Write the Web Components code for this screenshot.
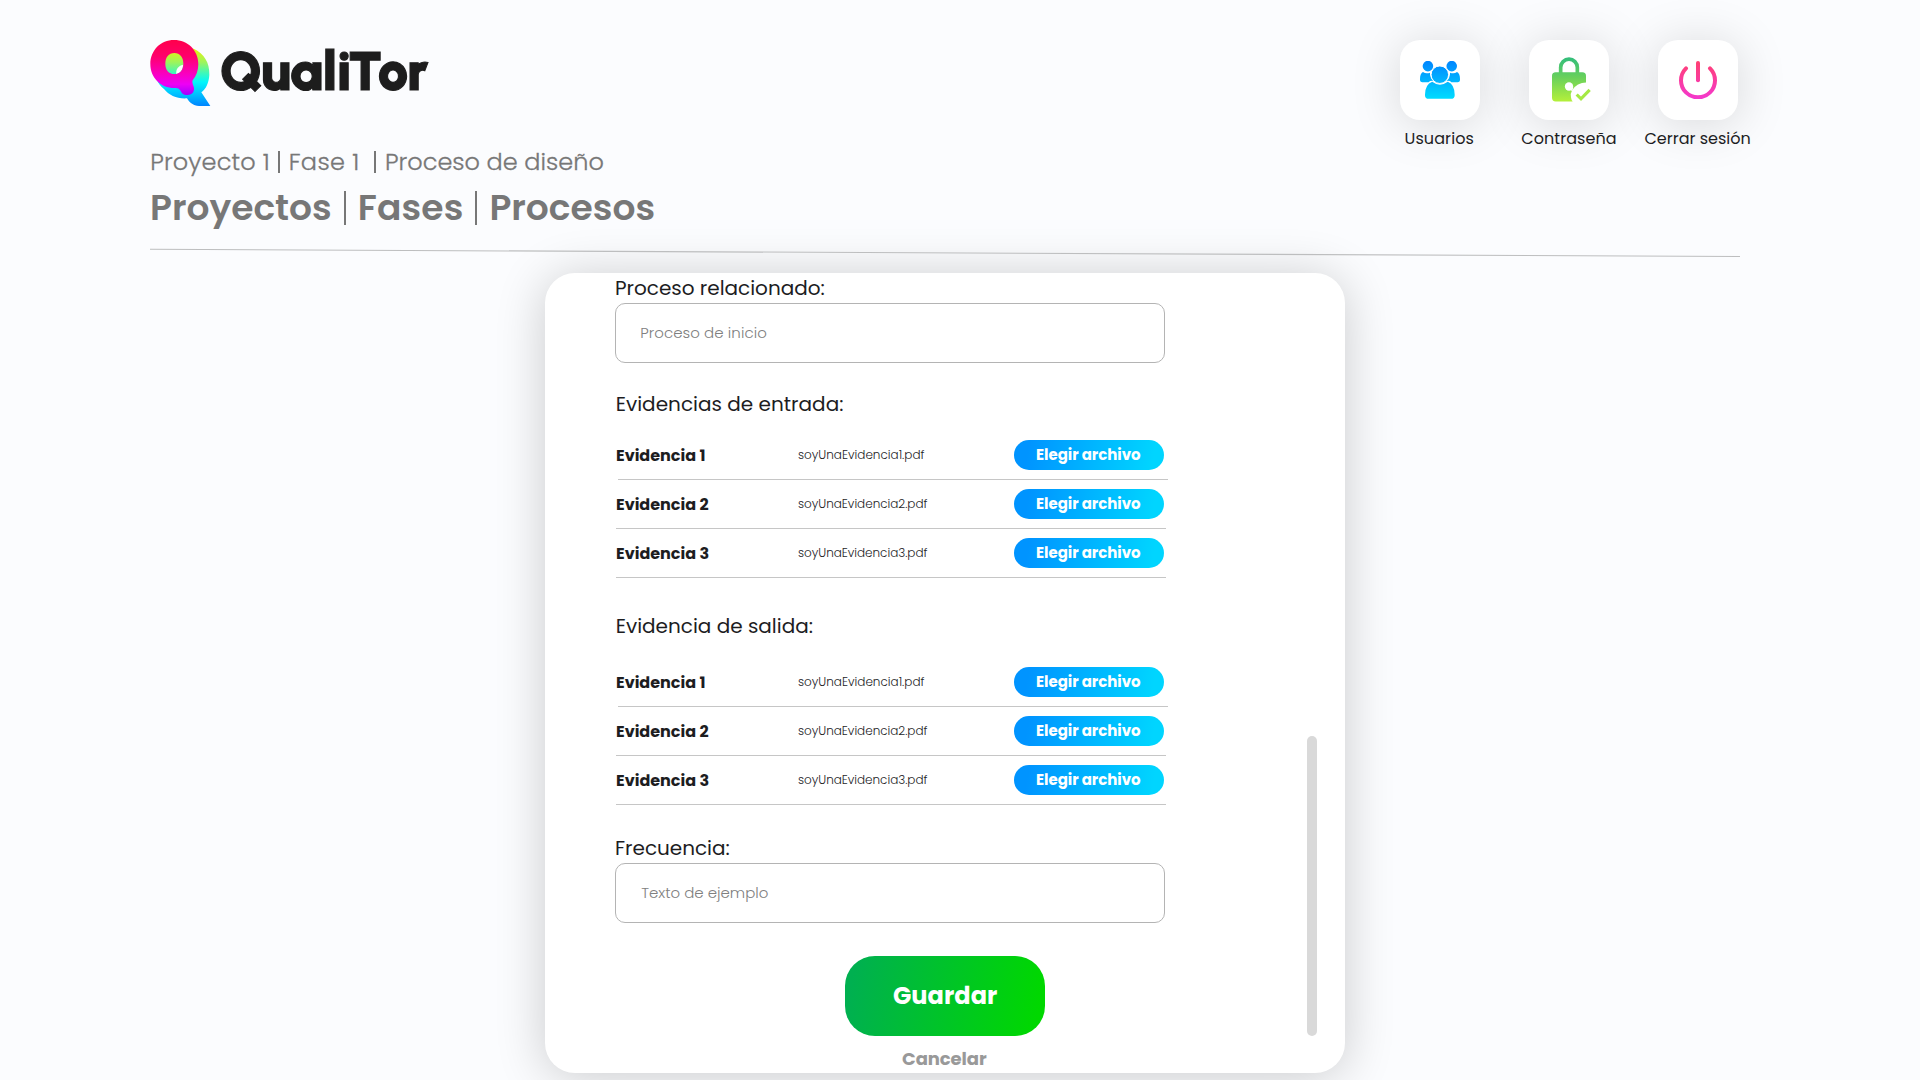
<!DOCTYPE html>
<html lang="es">
<head>
<meta charset="utf-8">
<title>QualiTor</title>
<style>
html,body{margin:0;height:1080px;overflow:hidden;background:#fbfcfe}
body{font-family:Poppins,Inter,"Open Sans",sans-serif;font-feature-settings:"cv11" 1;color:#1d1d1f}
</style>
</head>
<body>
<quali-app></quali-app>
<script>
const ctx = document.createElement('canvas').getContext('2d');

// Single-line text whose visible width is set by the "w" attribute.
customElements.define('fit-text', class extends HTMLElement {
  constructor() {
    super();
    this.attachShadow({mode: 'open'}).innerHTML =
      `<style>:host{display:inline-block;white-space:pre;flex:none}</style><slot></slot>`;
  }
  connectedCallback() {
    const t = this.textContent, w = +this.getAttribute('w');
    if (this.hasAttribute('size')) this.style.fontSize = this.getAttribute('size') + 'px';
    if (this.hasAttribute('weight')) this.style.fontWeight = this.getAttribute('weight');
    if (!w || t.length < 2) return;
    const cs = getComputedStyle(this);
    ctx.font = `${cs.fontWeight} ${cs.fontSize} ${cs.fontFamily}`;
    const a = ctx.measureText(t[0]), b = ctx.measureText(t[t.length - 1]);
    const left = -a.actualBoundingBoxLeft, right = b.width - b.actualBoundingBoxRight;
    const range = document.createRange();
    range.selectNodeContents(this);
    const natural = range.getBoundingClientRect().width;
    const ls = (w - (natural - left - right)) / (t.length - 1);
    this.style.letterSpacing = ls + 'px';
    this.style.marginLeft = -left + 'px';
    this.style.marginRight = -(right + ls) + 'px';
  }
});

customElements.define('quali-logo', class extends HTMLElement {
  constructor() {
    super();
    this.attachShadow({mode: 'open'}).innerHTML = `
<style>
:host{display:flex;height:66px}
svg{display:block;width:61px;height:67px;flex:none}
.word{display:flex;padding-left:10.8px}
fit-text{font-family:Urbanist,Poppins,Inter,sans-serif;line-height:62px;color:#1d1d1d;-webkit-text-stroke:1.1px #1d1d1d}
</style>
<svg viewBox="59 60 183 201">
  <defs>
    <linearGradient id="back" x1="0" y1="90" x2="0" y2="258" gradientUnits="userSpaceOnUse">
      <stop offset="0" stop-color="#e2f312"/><stop offset=".22" stop-color="#9df45c"/><stop offset=".42" stop-color="#3bf8bd"/><stop offset=".57" stop-color="#00f6fb"/><stop offset=".8" stop-color="#00bdff"/><stop offset="1" stop-color="#0084ff"/>
    </linearGradient>
    <linearGradient id="front" x1="0" y1="60" x2="0" y2="226" gradientUnits="userSpaceOnUse">
      <stop offset="0" stop-color="#ff004b"/><stop offset=".3" stop-color="#ff006c"/><stop offset=".6" stop-color="#fa00bd"/><stop offset=".8" stop-color="#ee00f5"/><stop offset="1" stop-color="#9f00ff"/>
    </linearGradient>
  </defs>
  <path fill="url(#back)" fill-rule="evenodd" d="M88 88 L190 86 C222 101 238 128 237 164 C236 187 227 207 213 217 L240 258 L206 258 C189 257 177 248 170 235 C141 237 116 226 101 207 C91 199 84 191 80 180Z M158 134 C144 137 136 148 138 162 C149 160 158 150 158 134Z"/>
  <path fill="url(#front)" fill-rule="evenodd" d="M131 60 C172 60 204 91 204 132 C204 151 198 168 187 181 Q184 186 188 195 C196 210 188 225 171 225 C158 225 154 219 149 210 Q145 203 134 204 C91 205 60 173 60 132 C60 91 91 60 131 60Z M132 99 C115 99 105 112 105 131 C105 150 115 162 132 162 C149 162 159 150 159 131 C159 112 149 99 132 99Z"/>
</svg>
<div class="word"><fit-text w="207" size="54.5" weight="900">QualiTor</fit-text></div>`;
  }
});

const ICONS = {
  users: `<svg width="40" height="38" viewBox="120 123 121 114"><defs><linearGradient id="g" x1="0" y1="123" x2="0" y2="237" gradientUnits="userSpaceOnUse"><stop stop-color="#0086ff"/><stop offset="1" stop-color="#00dcff"/></linearGradient></defs>
    <g fill="url(#g)"><circle cx="144" cy="138" r="16"/><circle cx="216" cy="138" r="16"/>
    <path d="M129 156Q138 162 150 158Q150 176 162 183Q151 181 146 187H127Q119 187 120 177Q120 161 129 156Z"/>
    <path d="M232 156Q223 162 211 158Q211 176 199 183Q210 181 215 187H234Q242 187 241 177Q241 161 232 156Z"/>
    <circle cx="180" cy="164" r="26.5" stroke="#fff" stroke-width="3"/>
    <path d="M157 185Q180 203 204 185Q225 193 225 225Q225 237 213 237H147Q135 237 135 225Q135 193 157 185Z"/></g></svg>`,
  lock: `<svg width="39" height="45" style="margin:-2px 0 0 4.6px" viewBox="516 110 117 134"><defs><linearGradient id="g" x1="0" y1="110" x2="0" y2="243" gradientUnits="userSpaceOnUse"><stop stop-color="#32bd7c"/><stop offset=".45" stop-color="#68d05c"/><stop offset="1" stop-color="#b4f03a"/></linearGradient></defs>
    <path d="M542 160V141A25 25 0 0 1 592 141V160" fill="none" stroke="url(#g)" stroke-width="11"/>
    <path fill="url(#g)" d="M527 155H607Q618 155 618 166V186Q606 186 594 192Q568 208 573 231Q574 238 578 243H527Q516 243 516 232V166Q516 155 527 155Z"/>
    <circle cx="567" cy="198" r="12.5" fill="#fff"/><path d="M567 204L580 201L576 212Z" fill="#fff"/>
    <path d="M590 222L603 235L629 208" fill="none" stroke="#a5e944" stroke-width="9.5"/></svg>`,
  power: `<svg width="38" height="38" viewBox="897 123 114 114"><defs><linearGradient id="g" x1="0" y1="123" x2="0" y2="237" gradientUnits="userSpaceOnUse"><stop stop-color="#ff4071"/><stop offset="1" stop-color="#f438cd"/></linearGradient></defs>
    <path fill="url(#g)" d="M948 129Q948 123 954 123Q960 123 960 129V181Q960 187 954 187Q948 187 948 181Z"/>
    <path d="M918 145A51 51 0 1 0 990 145" fill="none" stroke="url(#g)" stroke-width="12" stroke-linecap="round"/></svg>`
};

customElements.define('nav-tile', class extends HTMLElement {
  constructor() {
    super();
    const a = n => this.getAttribute(n);
    this.attachShadow({mode: 'open'}).innerHTML = `
<style>
:host{display:flex;flex-direction:column;align-items:center;width:80px;height:112px;flex:none}
.tile{flex:none;width:80px;height:80px;border-radius:20px;background:#fff;display:flex;align-items:center;justify-content:center;box-shadow:0 4px 50px rgba(0,0,0,.15)}
.label{display:flex;justify-content:center;line-height:24px;margin-top:7px;padding-right:1px;position:relative}
svg{display:block}
</style>
<div class="tile">${ICONS[a('icon')]}</div>
<div class="label"><fit-text w="${a('w')}" size="16">${a('label')}</fit-text></div>`;
  }
});

customElements.define('page-header', class extends HTMLElement {
  constructor() {
    super();
    this.attachShadow({mode: 'open'}).innerHTML = `
<style>
:host{display:block;padding:40px 180px 0 150px}
.top{display:flex;justify-content:space-between;height:66px}
nav{display:flex;gap:49px;padding-right:2px}
.crumbs,.title{display:flex;color:#777;padding-left:1.2px}
.crumbs{margin-top:41px;line-height:30px;font-size:24px;font-weight:300;-webkit-text-stroke:.3px #777}
.title{margin-top:8px;line-height:45px;font-size:36px;font-weight:600;padding-left:2px}
i{flex:none;width:2px;background:#777}
.crumbs i{height:22px;margin:4px 10px 0 10px}
.title i{height:34px;width:2px;margin:6px 14px 0 13.7px}
.rule{display:block;margin-top:18px}
</style>
<div class="top"><quali-logo></quali-logo>
<nav>
  <nav-tile icon="users" label="Usuarios" w="68"></nav-tile>
  <nav-tile icon="lock" label="Contraseña" w="94.5"></nav-tile>
  <nav-tile icon="power" label="Cerrar sesión" w="106"></nav-tile>
</nav></div>
<div class="crumbs"><fit-text w="116.5">Proyecto 1</fit-text><i></i><fit-text w="67.5">Fase 1</fit-text><i style="margin-left:16.8px"></i><fit-text w="217.5">Proceso de diseño</fit-text></div>
<div class="title"><fit-text w="178">Proyectos</fit-text><i></i><fit-text w="102">Fases</fit-text><i></i><fit-text w="162">Procesos</fit-text></div>
<svg class="rule" width="1590" height="10" viewBox="0 0 1590 10"><path d="M0 1.3L1590 8.5" stroke="#bdbebf" stroke-width="1.1"/></svg>`;
  }
});

customElements.define('text-field', class extends HTMLElement {
  constructor() {
    super();
    const a = n => this.getAttribute(n);
    this.attachShadow({mode: 'open'}).innerHTML = `
<style>
:host{display:block;width:550px}
.label{display:flex;line-height:30px;padding-left:1px}
.box{box-sizing:border-box;height:60px;border:1px solid #b4b4b4;border-radius:10px;display:flex;align-items:center;padding:0 25.2px;line-height:20px;color:#808080}
</style>
<div class="label"><fit-text w="${a('lw')}" size="20">${a('label')}</fit-text></div>
<div class="box"><fit-text w="${a('vw')}" size="15" weight="300">${a('value')}</fit-text></div>`;
  }
});

customElements.define('evidence-row', class extends HTMLElement {
  constructor() {
    super();
    const n = +this.getAttribute('n');
    this.attachShadow({mode: 'open'}).innerHTML = `
<style>
:host{display:block;width:552px}
.cells{display:grid;grid-template-columns:182px 216px 150px;align-items:center;height:48px}
.cells>div{display:flex}
.line{height:1px;width:550px;background:#c6c6c6;margin-left:${n === 1 ? 2 : 0}px}
button{border:0;padding:0 1px 1px 0;box-sizing:border-box;margin:0;height:30px;width:150px;border-radius:15px;font:inherit;line-height:21px;font-feature-settings:inherit;color:#fff;background:linear-gradient(100deg,#0094ff 10%,#00d5ff 92%);display:flex;align-items:center;justify-content:center}
</style>
<div class="cells">
<div><fit-text w="${[0, 88.5, 92.5, 92.5][n]}" size="16" weight="700">Evidencia ${n}</fit-text></div>
<div><fit-text w="${[0, 126.5, 129.5, 129.5][n]}" size="12" weight="300">soyUnaEvidencia${n}.pdf</fit-text></div>
<button><fit-text w="105" size="15" weight="700">Elegir archivo</fit-text></button>
</div><div class="line"></div>`;
  }
});

customElements.define('evidence-group', class extends HTMLElement {
  constructor() {
    super();
    const a = n => this.getAttribute(n);
    this.attachShadow({mode: 'open'}).innerHTML = `
<style>
:host{display:flex;flex-direction:column;padding-left:1px}
.label{display:flex;line-height:30px;padding-left:.7px;margin-bottom:${a('gap')}px}
</style>
<div class="label"><fit-text w="${a('lw')}" size="20">${a('label')}</fit-text></div>
<slot></slot>`;
  }
});

customElements.define('form-card', class extends HTMLElement {
  constructor() {
    super();
    this.attachShadow({mode: 'open'}).innerHTML = `
<style>
:host{box-sizing:border-box;display:flex;width:800px;height:800px;padding-left:70px;border-radius:30px;background:#fff;box-shadow:0 4px 50px rgba(0,0,0,.2)}
.content{display:flex;flex-direction:column;width:660px}
.bar{width:10px;height:300px;border-radius:5px;background:#d9d9d9;align-self:flex-end;margin:0 0 37px 32px}
</style>
<div class="content"><slot></slot></div><div class="bar"></div>`;
  }
});

customElements.define('form-actions', class extends HTMLElement {
  constructor() {
    super();
    this.attachShadow({mode: 'open'}).innerHTML = `
<style>
:host{display:flex;flex-direction:column;align-items:center;margin-top:33px}
button{border:0;padding:0 0 2px;box-sizing:border-box;width:200px;height:80px;border-radius:30px;font:inherit;font-feature-settings:inherit;color:#fff;background:linear-gradient(100deg,#00b050 5%,#00d800 95%);display:flex;align-items:center;justify-content:center}
a{display:flex;justify-content:center;line-height:24px;margin-top:11px;color:#999;padding-right:1px}
</style>
<button><fit-text w="104" size="24" weight="700">Guardar</fit-text></button>
<a><fit-text w="85" size="18" weight="700">Cancelar</fit-text></a>`;
  }
});

customElements.define('quali-app', class extends HTMLElement {
  constructor() {
    super();
    const rows = '<evidence-row n="1"></evidence-row><evidence-row n="2"></evidence-row><evidence-row n="3"></evidence-row>';
    this.attachShadow({mode: 'open'}).innerHTML = `
<style>
:host{display:block;width:1920px;height:1080px;overflow:hidden;background:#fbfcfe}
form-card{margin:15px 0 0 545px}
</style>
<page-header></page-header>
<form-card>
  <text-field label="Proceso relacionado:" lw="208.5" value="Proceso de inicio" vw="125"></text-field>
  <evidence-group style="margin-top:26px" label="Evidencias de entrada:" lw="226.5" gap="12">${rows}</evidence-group>
  <evidence-group style="margin-top:33px" label="Evidencia de salida:" lw="196" gap="17">${rows}</evidence-group>
  <text-field style="margin-top:28px" label="Frecuencia:" lw="113.5" value="Texto de ejemplo" vw="126.5"></text-field>
  <form-actions></form-actions>
</form-card>`;
  }
});
</script>
</body>
</html>
